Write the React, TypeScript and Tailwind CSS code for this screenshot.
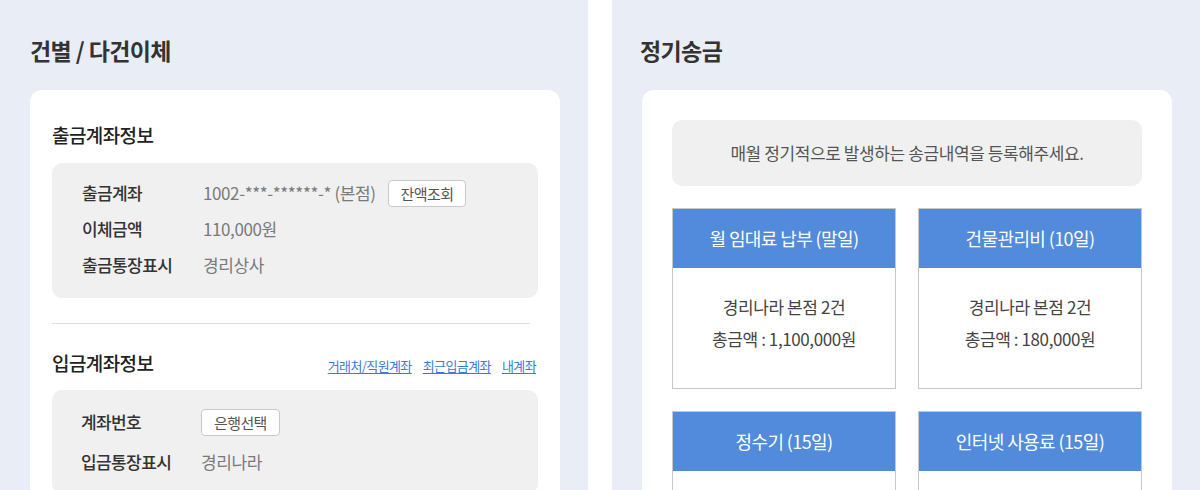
import React from 'react';

const FONT = "font-['Noto_Sans_CJK_KR','Noto_Sans',sans-serif]";

const OUT_ROWS = [
  { label: '출금계좌', value: '1002-***-******-* (본점)', button: '잔액조회' },
  { label: '이체금액', value: '110,000원' },
  { label: '출금통장표시', value: '경리상사' },
];

const IN_ROWS = [
  { label: '계좌번호', button: '은행선택' },
  { label: '입금통장표시', value: '경리나라' },
];

const LINKS = ['거래처/직원계좌', '최근입금계좌', '내계좌'];

const SCHEDULES = [
  { title: '월 임대료 납부 (말일)', count: '경리나라 본점 2건', total: '총금액 : 1,100,000원' },
  { title: '건물관리비 (10일)', count: '경리나라 본점 2건', total: '총금액 : 180,000원' },
  { title: '정수기 (15일)' },
  { title: '인터넷 사용료 (15일)' },
];

function SmallButton({ label }: { label: string }) {
  return (
    <button
      type="button"
      className="h-[27px] px-[12px] bg-white border border-[#c9c9c9] rounded-[4px] text-[15px] text-[#555] tracking-[-0.6px] leading-none"
    >
      {label}
    </button>
  );
}

export default function App() {
  return (
    <div className={`flex w-[1200px] h-[490px] overflow-hidden bg-white gap-[24px] ${FONT}`}>
      {/* 건별 / 다건이체 */}
      <section className="w-[588px] shrink-0 bg-[#e9eef6] pl-[30px] pt-[34px]">
        <h2 className="h-[32px] leading-[32px] text-[23px] font-bold text-[#333] tracking-[-0.6px]">건별 / 다건이체</h2>

        <div className="mt-[24px] w-[530px] h-[500px] bg-white rounded-[12px] px-[22px] pt-[32px]">
          <h3 className="h-[26px] leading-[26px] text-[19px] font-medium text-[#222] tracking-[-0.6px]">출금계좌정보</h3>

          <div className="mt-[15px] bg-[#f0f0f0] rounded-[10px] pl-[30px] pt-[12px] pb-[15px]">
            {OUT_ROWS.map(row => (
              <div key={row.label} className="flex items-center h-[36px]">
                <div className="w-[121px] text-[17px] font-medium text-[#333] tracking-[-0.6px]">{row.label}</div>
                <div className="text-[17px] text-[#7a7a7a] tracking-[-0.4px]">{row.value}</div>
                {row.button && (
                  <div className="ml-[12px]">
                    <SmallButton label={row.button} />
                  </div>
                )}
              </div>
            ))}
          </div>

          <div className="mt-[25px] mr-[8px] border-t border-[#dedede]" />

          <div className="mt-[26px] flex items-center justify-between h-[26px]">
            <h3 className="leading-[26px] text-[19px] font-medium text-[#222] tracking-[-0.6px]">입금계좌정보</h3>
            <div className="flex gap-[11px] mt-[6px] mr-[2px]">
              {LINKS.map(l => (
                <a key={l} href="#" className="text-[13px] text-[#3a7bd8] underline underline-offset-2 tracking-[-0.6px]">
                  {l}
                </a>
              ))}
            </div>
          </div>

          <div className="mt-[14px] bg-[#f0f0f0] rounded-[10px] pl-[29px] pt-[12px] pb-[12px]">
            {IN_ROWS.map(row => (
              <div key={row.label} className="flex items-center h-[40px]">
                <div className="w-[120px] text-[17px] font-medium text-[#333] tracking-[-0.6px]">{row.label}</div>
                {row.value && <div className="text-[17px] text-[#7a7a7a] tracking-[-0.4px]">{row.value}</div>}
                {row.button && <SmallButton label={row.button} />}
              </div>
            ))}
          </div>
        </div>
      </section>

      {/* 정기송금 */}
      <section className="flex-1 bg-[#e9eef6] pl-[30px] pt-[34px]">
        <h2 className="h-[32px] leading-[32px] text-[23px] font-bold text-[#333] tracking-[-0.6px] -ml-[2px]">정기송금</h2>

        <div className="mt-[24px] w-[530px] h-[500px] bg-white rounded-[12px] px-[30px] pt-[30px]">
          <div className="h-[66px] bg-[#f0f0f0] rounded-[10px] flex items-center justify-center text-[17px] text-[#555] tracking-[-0.4px]">
            매월 정기적으로 발생하는 송금내역을 등록해주세요.
          </div>

          <div className="mt-[22px] grid grid-cols-2 gap-[22px]">
            {SCHEDULES.map(s => (
              <div key={s.title} className="border border-[#c8c8c8] bg-white">
                <div className="h-[59px] bg-[#528bdb] flex items-center justify-center text-[18px] text-white tracking-[-0.6px]">
                  {s.title}
                </div>
                <div className="h-[120px] flex flex-col items-center justify-center pb-[10px] text-[17px] text-[#444] tracking-[-0.4px] leading-[32px]">
                  {s.count && <div>{s.count}</div>}
                  {s.total && <div>{s.total}</div>}
                </div>
              </div>
            ))}
          </div>
        </div>
      </section>
    </div>
  );
}
